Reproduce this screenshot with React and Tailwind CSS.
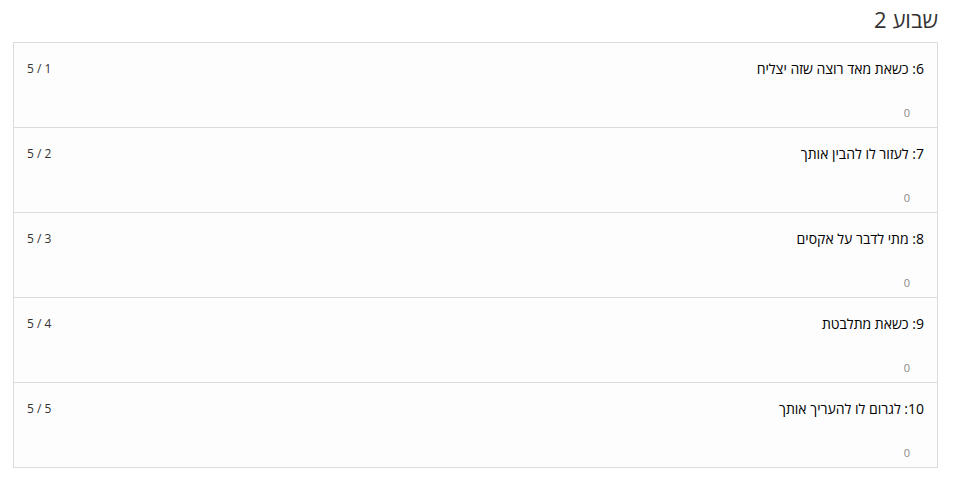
const items = [
  { n: 6, title: "כשאת מאד רוצה שזה יצליח" },
  { n: 7, title: "לעזור לו להבין אותך" },
  { n: 8, title: "מתי לדבר על אקסים" },
  { n: 9, title: "כשאת מתלבטת" },
  { n: 10, title: "לגרום לו להעריך אותך" },
];

export default function App() {
  return (
    <div
      dir="rtl"
      className="min-h-[486px] bg-white pl-[13px] pr-[24px] text-[#222]"
      style={{ fontFamily: '"Open Sans", "Noto Sans", sans-serif' }}
    >
      <h2 className="h-[42px] pt-[4px] text-[22px] leading-[30px] text-[#333]">שבוע 2</h2>
      <div className="border border-[#dcdcdc]">
        {items.map((item, i) => (
          <div
            key={item.n}
            className={`bg-[#fdfdfd] px-[13px] pt-[16px] ${
              i < items.length - 1 ? "h-[85px] border-b border-[#dcdcdc]" : "h-[84px]"
            }`}
          >
            <div className="flex items-start justify-between">
              <div className="text-[14px] leading-[20px] text-black">
                {item.n}: {item.title}
              </div>
              <div className="text-[12px] leading-[20px] text-[#333]">
                {i + 1} / 5
              </div>
            </div>
            <div className="mt-[26px] pr-[14px] text-[11px] leading-[16px] text-[#888]">0</div>
          </div>
        ))}
      </div>
    </div>
  );
}
